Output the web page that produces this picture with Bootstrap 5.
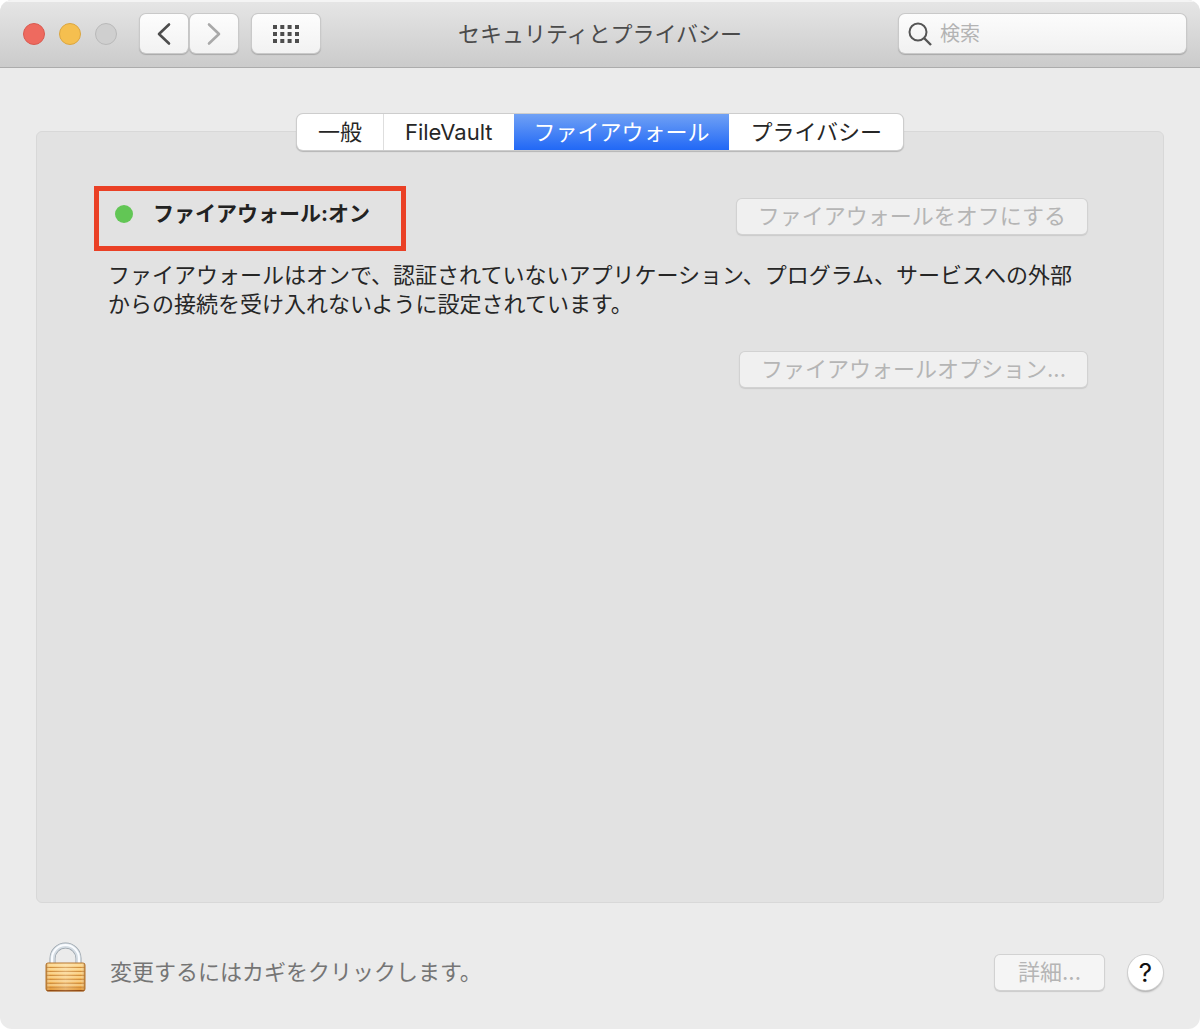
<!DOCTYPE html>
<html lang="ja">
<head>
<meta charset="utf-8">
<meta name="viewport" content="width=device-width, initial-scale=1">
<title>セキュリティとプライバシー</title>
<link rel="stylesheet" href="https://cdn.jsdelivr.net/npm/bootstrap@5.3.0/dist/css/bootstrap.min.css">
<style>
body { background: #fff; color: #262626; font: 22px/30px Inter, "Noto Sans CJK JP", sans-serif; }
.pref-window { background: #ebebeb; border-radius: 12px; overflow: hidden; }
.title-bar { height: 68px; background: linear-gradient(#e6e6e6, #cbcbcb); border-bottom: 1px solid #acacac; box-shadow: inset 0 2px 0 #f4f4f4; padding: 0 14px; }
.title-side { flex: 1 1 0; }
.title-bar h1 { font-size: 22px; line-height: 30px; font-weight: 400; color: #4b4b4b; }
.lights { gap: 14px; margin: 0 23px 0 9px; }
.light { width: 22px; height: 22px; border: 1px solid #b9b9b9; background: #cfcfcf; }
.light-close { background: #ee6a5f; border-color: #d95a50; }
.light-min { background: #f5bf4f; border-color: #dba640; }
.tool-group { gap: 14px; }
.tool-pair { gap: 2px; }
.tool-btn { height: 39px; width: 48px; border: 0; border-radius: 6px; background: linear-gradient(#fdfdfd, #f2f2f2); box-shadow: 0 0 0 1px #c9c9c9, 0 1px 1px 1px #a8a8a8; }
.tool-grid { width: 68px; }
.search-box { width: 287px; height: 39px; border-radius: 6px; background: linear-gradient(#fcfcfc, #f1f1f1); box-shadow: 0 0 0 1px #c9c9c9, 0 1px 1px 1px #a8a8a8; padding: 0 9px; }
.search-box input { font-size: 20px; line-height: 28px; color: #333; }
.search-box input::placeholder { color: #b3b3b3; opacity: 1; }
.pref-main { padding: 46px 36px 0; }
.pref-tabs { position: relative; z-index: 1; margin-bottom: -19px; border-radius: 6px; background: #fff; box-shadow: 0 0 0 1px #cdcdcd, 0 1px 1px 1px #b5b5b5; }
.pref-tabs button { height: 36px; padding: 0 21px; border: 0; background: none; color: #262626; line-height: 36px; }
.pref-tabs button + button { border-left: 1px solid #dedede; }
.pref-tabs button.active { padding: 0 19px; background: linear-gradient(#70a1f5, #2168f6) border-box; color: #fff; border-left-color: transparent; }
.pref-tabs button.active + button { border-left-color: transparent; }
.pref-panel { background: #e2e2e2; border: 1px solid #d8d8d8; border-radius: 6px; padding: 54px 76px 40px 57px; }
.status-box { border: 5px solid #ea4025; height: 65px; padding: 8px 31px 0 16px; }
.status-dot { width: 18px; height: 18px; background: #62c655; }
.status-box strong { font-size: 21px; font-weight: 700; color: #222; }
.mac-btn { height: 35px; border: 0; border-radius: 5px; background: #f0f0f0; box-shadow: 0 0 0 1px #d2d2d2, 0 1px 1px 1px #cbcbcb; color: #b5b5b5; padding: 0 21px; line-height: 35px; }
.status-row .mac-btn { margin-top: 13px; }
.status-text { line-height: 29px; margin: 10px 0 33px 14px; }
.pref-foot { padding: 48px 37px 36px; height: 126px; }
.lock-btn { margin-bottom: 11px; }
.foot-text { color: #757575; }
.pref-foot .mac-btn { background: #f5f5f5; padding: 0 23px; }
.help-btn { width: 35px; height: 35px; border: 0; background: #fff; box-shadow: 0 0 0 1px #cfcfcf, 0 2px 2px #a8a8a8; font-size: 26px; line-height: 35px; color: #111; }
</style>
</head>
<body>
<div class="pref-window min-vh-100 d-flex flex-column">
  <header class="title-bar d-flex align-items-center">
    <div class="title-side d-flex align-items-center">
      <div class="lights d-flex">
        <button class="light light-close rounded-circle p-0" aria-label="閉じる"></button>
        <button class="light light-min rounded-circle p-0" aria-label="しまう"></button>
        <button class="light rounded-circle p-0" aria-label="拡大" disabled></button>
      </div>
      <div class="tool-group d-flex">
        <div class="tool-pair d-flex">
          <button class="tool-btn d-flex align-items-center justify-content-center p-0" aria-label="戻る">
            <svg width="16" height="24" viewBox="0 0 16 24" fill="none" stroke="#4d4d4d" stroke-width="2.6" stroke-linecap="round" stroke-linejoin="round"><path d="M13 2.500 3 12l10 9.500"/></svg>
          </button>
          <button class="tool-btn d-flex align-items-center justify-content-center p-0" aria-label="進む" disabled>
            <svg width="16" height="24" viewBox="0 0 16 24" fill="none" stroke="#a9a9a9" stroke-width="2.6" stroke-linecap="round" stroke-linejoin="round"><path d="M3 2.500 13 12 3 21.500"/></svg>
          </button>
        </div>
        <button class="tool-btn tool-grid d-flex align-items-center justify-content-center p-0" aria-label="すべてを表示">
          <svg width="26" height="18" viewBox="0 0 26 18" fill="#4d4d4d"><path d="M0 0h4v4H0zM7.300 0h4v4h-4zM14.600 0h4v4h-4zM22 0h4v4h-4zM0 7h4v4H0zM7.300 7h4v4h-4zM14.600 7h4v4h-4zM22 7h4v4h-4zM0 14h4v4H0zM7.300 14h4v4h-4zM14.600 14h4v4h-4zM22 14h4v4h-4z"/></svg>
        </button>
      </div>
    </div>
    <h1 class="m-0">セキュリティとプライバシー</h1>
    <div class="title-side d-flex justify-content-end">
      <label class="search-box d-flex align-items-center">
        <svg class="flex-shrink-0" width="24" height="24" viewBox="0 0 24 24" fill="none" stroke="#555" stroke-width="2"><circle cx="10" cy="10" r="8.500"/><path d="m16 16 7 7" stroke-width="2.400"/></svg>
        <input class="form-control border-0 bg-transparent shadow-none p-0 ms-2" type="search" placeholder="検索" aria-label="検索">
      </label>
    </div>
  </header>

  <main class="pref-main flex-grow-1 d-flex flex-column">
    <div class="pref-tabs d-flex align-self-center overflow-hidden" role="tablist">
      <button role="tab">一般</button>
      <button role="tab">FileVault</button>
      <button role="tab" class="active" aria-selected="true">ファイアウォール</button>
      <button role="tab">プライバシー</button>
    </div>
    <section class="pref-panel flex-grow-1">
      <div class="status-row d-flex justify-content-between align-items-start">
        <div class="status-box d-flex align-items-start">
          <div class="d-flex align-items-center">
            <span class="status-dot rounded-circle me-3"></span>
            <strong class="ms-1">ファイアウォール:オン</strong>
          </div>
        </div>
        <button class="mac-btn" disabled>ファイアウォールをオフにする</button>
      </div>
      <p class="status-text">ファイアウォールはオンで、認証されていないアプリケーション、プログラム、サービスへの外部からの接続を受け入れないように設定されています。</p>
      <div class="d-flex justify-content-end">
        <button class="mac-btn" disabled>ファイアウォールオプション...</button>
      </div>
    </section>
  </main>

  <footer class="pref-foot d-flex align-items-center">
    <button class="lock-btn border-0 bg-transparent p-0 ms-2 d-flex" aria-label="カギ">
      <svg width="41" height="50" viewBox="0 0 41 50">
        <defs>
          <linearGradient id="brass" x2="0" y2="1"><stop stop-color="#fbd58a"/><stop offset=".5" stop-color="#f3b85b"/><stop offset="1" stop-color="#e39a3b"/></linearGradient>
          <linearGradient id="edge"><stop stop-color="#9c5a12" stop-opacity=".6"/><stop offset=".1" stop-color="#fff" stop-opacity="0"/><stop offset=".5" stop-color="#fff" stop-opacity=".25"/><stop offset=".9" stop-color="#fff" stop-opacity="0"/><stop offset="1" stop-color="#9c5a12" stop-opacity=".6"/></linearGradient>
        </defs>
        <path d="M7.500 24V16.500a13 13 0 0 1 26 0v7.500" fill="none" stroke="#9aa3ab" stroke-width="6"/>
        <path d="M7.500 24V16.500a13 13 0 0 1 26 0v7.500" fill="none" stroke="#d5dde4" stroke-width="4.600"/>
        <path d="M7 24V16.500a13.500 13.500 0 0 1 27 0v7.500" fill="none" stroke="#fafcff" stroke-width="2"/>
        <rect x="1" y="21" width="39" height="28" rx="2" fill="url(#brass)" stroke="#b5752e" stroke-width="1"/>
        <path d="M1 25.500h39M1 29.500h39M1 33.500h39M1 37.500h39M1 41.500h39M1 45.500h39" stroke="#d08c38" stroke-width="1.200"/>
        <path d="M2 23h37M2 27h37M2 31h37M2 35h37M2 39h37M2 43h37" stroke="#ffe3a6" stroke-width="1"/>
        <path d="M2 48.700h37" stroke="#91480e" stroke-width="1.200"/>
        <rect x="1" y="21.500" width="39" height="27" fill="url(#edge)"/>
      </svg>
    </button>
    <span class="foot-text ms-4">変更するにはカギをクリックします。</span>
    <button class="mac-btn ms-auto me-4" disabled>詳細...</button>
    <button class="help-btn rounded-circle p-0" aria-label="ヘルプ">?</button>
  </footer>
</div>
<script src="https://cdn.jsdelivr.net/npm/bootstrap@5.3.0/dist/js/bootstrap.bundle.min.js"></script>
</body>
</html>
